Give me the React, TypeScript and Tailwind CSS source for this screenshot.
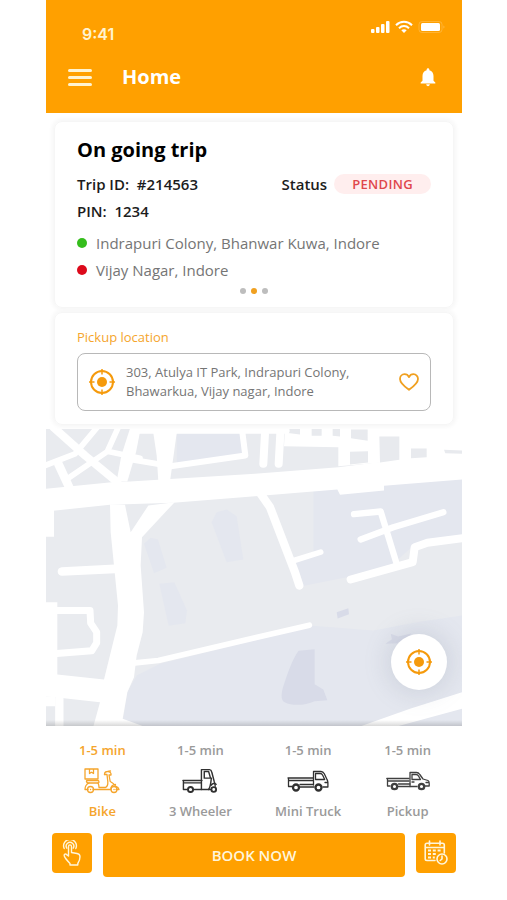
import { useState } from "react";
import { MdNotifications } from "react-icons/md";

const VEHICLES = [
  { id: "bike", name: "Bike", eta: "1-5 min", Icon: BikeIcon },
  { id: "three-wheeler", name: "3 Wheeler", eta: "1-5 min", Icon: ThreeWheelerIcon },
  { id: "mini-truck", name: "Mini Truck", eta: "1-5 min", Icon: MiniTruckIcon },
  { id: "pickup", name: "Pickup", eta: "1-5 min", Icon: PickupIcon },
];

const STOPS = [
  { name: "Indrapuri Colony, Bhanwar Kuwa, Indore", dot: "bg-[#35bd1c]" },
  { name: "Vijay Nagar, Indore", dot: "bg-[#dc0a1b]" },
];

function StatusIcons() {
  return (
    <svg width="76" height="14" viewBox="0 0 76 14" fill="#fff" aria-hidden="true">
      <rect x="1" y="9" width="3.500" height="4" rx="1" />
      <rect x="6" y="7" width="3.500" height="6" rx="1" />
      <rect x="11" y="4" width="3.500" height="9" rx="1" />
      <rect x="16" y="1" width="3.500" height="12" rx="1" />
      <g fill="none" stroke="#fff" strokeWidth="2">
        <path d="M26 5.200c4.500-4.500 11.500-4.500 16 0" />
        <path d="M29 8.200c2.900-2.800 7.100-2.800 10 0" />
      </g>
      <path d="M31.300 10.200c1.500-1.300 3.900-1.300 5.400 0L34 13z" />
      <rect x="49" y="1.500" width="23" height="11" rx="3" fill="none" stroke="#fff" strokeOpacity="0.200" />
      <rect x="51" y="3" width="19" height="8" rx="1.500" />
      <path d="M73.500 5.500v3c1.200-.4 1.200-2.600 0-3z" opacity="0.3" />
    </svg>
  );
}

function TargetIcon() {
  return (
    <svg width="28" height="28" viewBox="0 0 28 28" fill="none" stroke="#f59a0c" aria-hidden="true">
      <circle cx="14" cy="14" r="11" strokeWidth="2" />
      <circle cx="14" cy="14" r="5" fill="#f59a0c" stroke="none" />
      <path d="M14 1v5.500M14 21.500V27M1 14h5.500M21.500 14H27" strokeWidth="1.500" />
    </svg>
  );
}

function HeartIcon() {
  return (
    <svg width="20" height="18" viewBox="0 0 20 18" fill="none" stroke="#f0a020" strokeWidth="1.800" strokeLinejoin="round" aria-hidden="true">
      <path d="M10 16.800C5.500 13.600 1 10.300 1 6 1 3.200 3 1.200 5.500 1.200c1.900 0 3.600 1 4.500 2.900.9-1.900 2.600-2.900 4.500-2.900C17 1.200 19 3.200 19 6c0 4.300-4.500 7.600-9 10.800z" />
    </svg>
  );
}

function BikeIcon() {
  return (
    <svg width="36" height="26" viewBox="0 0 36 26" fill="none" stroke="#f5a52c" strokeWidth="1.300" strokeLinejoin="round" strokeLinecap="round" aria-hidden="true">
      <path d="M1 1h13v10H1zM5.500 1v4.500l2-1.300 2 1.300V1" />
      <path d="M3 12.500h11c1 0 1.500 2.500 0 2.500H4c-1.500 0-2-2.500-1-2.500z" />
      <path d="M5 15c-2.500 1-4 3.500-4 6.500h3M14 15c.8 1.500 1 3 1 4.500h6.500c2-1 2.500-3.500 2.300-6L23 6.500h-2.500" />
      <path d="M20.500 6.500c0-2 1.500-3 3-3l3-.5M24 3.500c2 .2 3.500 1.700 3 3.500h-2l1.200 6.500c2 1 4.500 3 5.800 5 1.500.3 2.500 1 3 3h-3M9 21.500h18c-.5-3 1.500-5 4.500-5" />
      <circle cx="6.500" cy="21.500" r="3" />
      <circle cx="30" cy="21.500" r="3" />
      <path d="M6.500 21.500h.1M30 21.500h.1" />
    </svg>
  );
}

function ThreeWheelerIcon() {
  return (
    <svg width="36" height="25" viewBox="0 0 38 26" fill="none" stroke="#303030" strokeWidth="1.500" strokeLinejoin="round" strokeLinecap="round" aria-hidden="true">
      <path d="M5.500 22.500H1.500V13M1 13h20M2 15.500h18M12 22.500h18" />
      <path d="M20.500 22.500V1.500H29c1.500 0 2 .8 2.400 2.500L34 14c.7 2 1.200 3 1 5" />
      <path d="M23.500 10.500v-7h4.600l2 7zM31 10.500c-.5 3-.5 9-3 12M31 18c1-2 3-2.500 5-1" />
      <circle cx="9" cy="22.500" r="2.700" strokeWidth="2" />
      <circle cx="33.500" cy="22.500" r="2.500" strokeWidth="2" />
    </svg>
  );
}

function MiniTruckIcon() {
  return (
    <svg width="42" height="22" viewBox="0 0 42 22" fill="none" stroke="#303030" strokeWidth="1.300" strokeLinejoin="round" strokeLinecap="round" aria-hidden="true">
      <path d="M5 16.500H1.500V8M1 8h25M2 10.500h24M13 14.500h13M13 17h14" />
      <path d="M26.500 15V1.500H34c1.500 0 2.500.8 3.300 2.300L40 9.500c.7.900.9 2 .9 3.500v4H36" />
      <path d="M28.500 9.500v-6h4.800c1.200 0 1.800.6 2.400 1.800l2 4.200zM38 12.500h2.500" />
      <circle cx="9" cy="17.500" r="3" strokeWidth="2.300" />
      <circle cx="31.500" cy="17.500" r="3" strokeWidth="2.300" />
    </svg>
  );
}

function PickupIcon() {
  return (
    <svg width="44" height="20" viewBox="0 0 44 20" fill="none" stroke="#404040" strokeWidth="1.300" strokeLinejoin="round" strokeLinecap="round" aria-hidden="true">
      <path d="M4 15H1.500V7.500M.8 7.500H23M2 10h21M12.500 13H24M12.500 15.500H31" />
      <path d="M24 15.500V1.500h6.500c1.500 0 2.500.8 3.300 2L37 8l5 1.500c1 .4 1.200 1.500 1.200 3V15H39" />
      <path d="M26 8.500v-5h4c1.200 0 2 .6 2.600 1.600L34.500 8.500zM40 11.500h2.500M26 11h2" />
      <circle cx="8.500" cy="15.500" r="2.700" strokeWidth="2.300" />
      <circle cx="35.500" cy="15.500" r="2.700" strokeWidth="2.300" />
    </svg>
  );
}

function TapIcon() {
  return (
    <svg width="20" height="26" viewBox="0 0 20 26" fill="none" stroke="#fff6dc" strokeWidth="1.400" strokeLinejoin="round" strokeLinecap="round" aria-hidden="true">
      <path d="M6.500 16V6.500c0-2.200 3-2.200 3 0v6l5.500 1c2 .4 3 1.500 3 3.200 0 3-.8 4.800-2.200 6.800V25H8v-1.500C5.500 21 3 18.500 2.200 15.800c-.4-1.600 1.300-2.300 2.400-1.200z" />
      <path d="M4.800 8.200a3.800 3.800 0 1 1 6.400 0M2.200 8.500a6.400 6.400 0 1 1 11.600 0" />
    </svg>
  );
}

function ScheduleIcon() {
  return (
    <svg width="24" height="26" viewBox="0 0 24 26" fill="none" stroke="#fff6dc" strokeWidth="1.600" strokeLinejoin="round" strokeLinecap="round" aria-hidden="true">
      <path d="M11 20.500H3c-1 0-1.800-.7-1.800-1.700V5c0-1 .8-1.800 1.800-1.800h15.500c1 0 1.800.8 1.800 1.800v8M1.500 7.500h18.500M5.500 1v4M16 1v4" />
      <path d="M4 10.500h3M8.800 10.500h3M13.600 10.500h3M4 14h3M8.800 14h3M4 17.500h3M8.800 17.500h2" strokeWidth="2.200" strokeLinecap="butt" />
      <circle cx="18" cy="19" r="5" />
      <path d="M18 16v3l-1.800 1.500" />
    </svg>
  );
}

function CityMap() {
  return (
    <svg
      className="absolute inset-0 h-full w-full"
      viewBox="18 9 1248 894"
      preserveAspectRatio="xMidYMid slice"
      fill="none"
      stroke="#fff"
      strokeLinejoin="round"
      role="img"
      aria-label="Map around the pickup location"
    >
      <rect x="18" y="9" width="1248" height="894" fill="#e9ebef" stroke="none" />

      {/* water and parks */}
      <g fill="#e4e7ef" stroke="none">
        <path d="M246 903L262 800 290 750 360 715 645 645 810 600 1000 615 1130 590 1266 570V903z" />
        <path d="M820 190L1266 160V335L1120 360 1060 415 920 455 785 482 760 400 820 385z" />
        <path d="M515 290l15-30 30-8 30 20 20 130-50 8z" />
        <path d="M312 355l20-18 22 5 26 85-38 16z" />
        <path d="M358 475l45-5 38 85-5 38-50 8z" />
        <path d="M410 25h190l8 65-198 22z" />
      </g>
      <g fill="#d8dbe8" stroke="none">
        <path d="M890 560l35-12 2 18-34 13z" />
        <path d="M776 676l48-5v105l26 16 12 32-38 3c-30 14-70 14-90 3-14-5-10-35 0-60 14-40 24-70 42-94z" />
        <path d="M1036 655l20-14-4-16 22 8 40-9-15 20 5 12-30-3z" />
      </g>

      {/* main roads */}
      <g fill="#fff" stroke="none">
        <path d="M18 190L215 170 270 168 645 145 895 125 1015 110 1266 92V162L1032 181V195L900 208 892 192 645 212 400 232 210 238 18 258z" />
        <path d="M210 236L255 238 272 320 325 240 404 230 306 335 302 420 312 560 308 620 290 690 282 755 262 800 248 880 312 903H160L180 830 18 812V530H52V747L192 762 232 600 234 540 222 420 212 320z" />
        <path d="M270 9H302L288 80 262 168H230L244 90z" />
        <path d="M338 9H412L390 168H355L350 90z" />
        <path d="M735 9H1266V95L1015 112 895 122V65L732 62z" />
        <path d="M18 250h24v84H18zM18 812h28v30H18z" />
        <path d="M960 903L1110 850 1266 800V850L1070 903z" />
      </g>

      {/* blocks in the upper right quarter */}
      <g fill="#e8eaee" stroke="none">
        <path d="M738 9h42v18l-42-5zM815 9h30v22h-30zM878 9h22v24l-22-2zM933 12h50v34l-50-8z" />
        <path d="M930 79l54-2v34l-54 6zM1018 33h60v70l-58 8zM1113 69h47v26l-47 3zM1212 73l54 2v10l-50-2z" />
      </g>

      {/* side streets */}
      <g strokeLinecap="round">
        <path d="M40 5L135 90 232 170" strokeWidth="24" />
        <path d="M172 5L105 85 10 122M235 5L202 78 85 158M205 78L300 98" strokeWidth="17" />
        <path d="M55 115L92 195" strokeWidth="26" />
        <path d="M280 103L392 122 616 90 606 12M285 16H740" strokeWidth="18" />
        <path d="M676 5L670 115M722 5L716 115" strokeWidth="24" />
        <path d="M66 438L225 430" strokeWidth="26" />
        <path d="M45 555H150L152 593 170 620V652L155 676 50 684" strokeWidth="21" />
        <path d="M58 820V910" strokeWidth="25" />
        <path d="M285 712L355 705 645 637 808 599" strokeWidth="17" />
        <path d="M662 205L690 245 765 440 778 480" strokeWidth="25" />
        <path d="M762 405L842 380" strokeWidth="17" />
        <path d="M942 266L1022 258 1070 415M962 342L1060 305 1210 260" strokeWidth="19" />
        <path d="M932 462L1118 410 1124 365 1162 352 1270 338" strokeWidth="24" />
      </g>
    </svg>
  );
}

export default function App() {
  const [vehicle, setVehicle] = useState("bike");
  const [address, setAddress] = useState("303, Atulya IT Park, Indrapuri Colony, Bhawarkua, Vijay nagar, Indore");

  return (
    <div className="min-h-screen bg-white pr-[45px] pl-[46px] font-['Open_Sans',sans-serif]">
      <div className="flex min-h-screen flex-col bg-white pb-[23px]">
        <header className="bg-[#ffa000] pb-[22px] text-white">
          <div className="flex items-start justify-between pt-5 pr-4 pl-9">
            <span className="pt-[2px] font-['Inter',sans-serif] text-base leading-6 font-semibold text-[#fff3d0]">9:41</span>
            <StatusIcons />
          </div>
          <div className="flex items-center pt-[17px] pr-[23px] pl-[22px]">
            <button type="button" aria-label="Menu" className="flex w-6 flex-col gap-1">
              <span className="h-[3px] rounded-full bg-[#fff3d0]" />
              <span className="h-[3px] rounded-full bg-[#fff3d0]" />
              <span className="h-[3px] rounded-full bg-[#fff3d0]" />
            </button>
            <h1 className="ml-[30px] flex-1 text-xl leading-7 font-bold">Home</h1>
            <button type="button" aria-label="Notifications">
              <MdNotifications size={22} />
            </button>
          </div>
        </header>

        <main className="flex flex-1 flex-col">
          <section className="mx-2 mt-2 rounded-lg border border-[#f6f6f6] px-[22px] pt-3 pb-[13px] shadow-[0_0_4px_2px_#f6f6f6]">
            <h2 className="text-xl leading-8 font-bold text-black">On going trip</h2>
            <div className="mt-[6px] flex items-center justify-between text-[15px] leading-6 font-semibold text-[#1c1c1c]">
              <p>Trip ID:&nbsp; #214563</p>
              <p className="flex items-center gap-[7px]">
                Status
                <span className="rounded-full bg-[#ffeeee] px-[18px] text-[13px] leading-5 tracking-wide text-[#e0474c]">PENDING</span>
              </p>
            </div>
            <p className="mt-[3px] text-[15px] leading-6 font-semibold text-[#1c1c1c]">PIN:&nbsp; 1234</p>
            <ul className="mt-2 flex flex-col gap-[3px]">
              {STOPS.map((stop) => (
                <li key={stop.name} className="flex items-center gap-[9px] text-[15px] leading-6 text-[#757575]">
                  <span className={`size-[10px] rounded-full ${stop.dot}`} />
                  {stop.name}
                </li>
              ))}
            </ul>
            <div className="mt-[6px] flex justify-center gap-[5px]">
              <button type="button" aria-label="Trip 1" className="size-[6px] rounded-full bg-[#bdbdbd]" />
              <button type="button" aria-label="Trip 2" className="size-[6px] rounded-full bg-[#f0a020]" />
              <button type="button" aria-label="Trip 3" className="size-[6px] rounded-full bg-[#bdbdbd]" />
            </div>
          </section>

          <section className="mx-2 mt-1 mb-1 rounded-lg border border-[#f6f6f6] px-[22px] pt-[14px] pb-[13px] shadow-[0_0_4px_2px_#f6f6f6]">
            <label htmlFor="pickup" className="block text-[13px] leading-5 text-[#f5a52c]">
              Pickup location
            </label>
            <div className="mt-[6px] flex items-center rounded-lg border border-[#b8b8b8] py-[9px] pr-[11px] pl-[10px]">
              <TargetIcon />
              <textarea
                id="pickup"
                rows={2}
                value={address}
                onChange={(e) => setAddress(e.target.value)}
                className="mr-3 ml-[10px] block min-w-0 flex-1 resize-none overflow-hidden text-[13px] leading-[19px] text-[#757575] outline-none"
              />
              <button type="button" aria-label="Save address">
                <HeartIcon />
              </button>
            </div>
          </section>

          <div className="relative min-h-[240px] flex-1 overflow-hidden">
            <CityMap />
            <div className="absolute inset-x-0 bottom-0 h-[6px] bg-linear-to-t from-black/15 to-transparent" />
            <button
              type="button"
              aria-label="Use current location"
              className="absolute right-[15px] bottom-9 flex size-14 items-center justify-center rounded-full bg-white shadow-[0_0_24px_4px_rgba(120,130,150,0.2)]"
            >
              <TargetIcon />
            </button>
          </div>
        </main>

        <div role="radiogroup" aria-label="Vehicle" className="flex justify-between pt-[14px] pr-[31px] pl-[33px]">
          {VEHICLES.map(({ id, name, eta, Icon }) => (
            <label
              key={id}
              className="relative flex cursor-pointer flex-col items-center text-[13px] leading-5 font-semibold text-[#9a9a9a] has-checked:text-[#f5a52c]"
            >
              <input
                type="radio"
                name="vehicle"
                value={id}
                checked={vehicle === id}
                onChange={() => setVehicle(id)}
                className="sr-only"
              />
              <span>{eta}</span>
              <span className="flex h-[41px] items-center">
                <Icon />
              </span>
              <span>{name}</span>
            </label>
          ))}
        </div>

        <footer className="mt-3 flex items-start gap-[11px] px-[6px]">
          <button type="button" aria-label="Choose on map" className="flex size-10 items-center justify-center rounded-[4px] bg-[#ffa000]">
            <TapIcon />
          </button>
          <button type="button" className="h-11 flex-1 rounded-[4px] bg-[#ffa000] text-[15px] font-semibold text-[#fff6dc]">
            BOOK NOW
          </button>
          <button type="button" aria-label="Schedule" className="flex size-10 items-center justify-center rounded-[4px] bg-[#ffa000]">
            <ScheduleIcon />
          </button>
        </footer>
      </div>
    </div>
  );
}
